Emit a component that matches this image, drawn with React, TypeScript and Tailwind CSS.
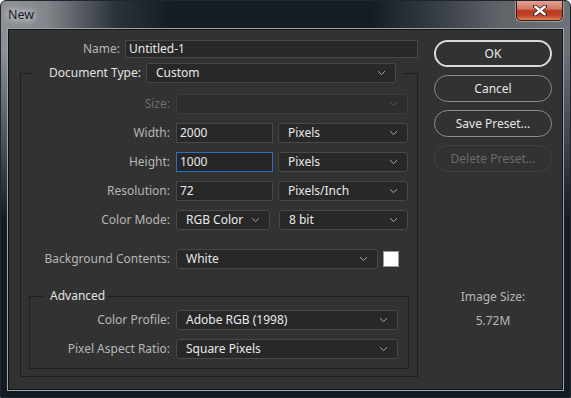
import React from "react";

const Chevron = ({ dim = false }: { dim?: boolean }) => (
  <svg width="9" height="6" viewBox="0 0 9 6" className="shrink-0">
    <path d="M1 1.2 L4.5 4.6 L8 1.2" fill="none" stroke={dim ? "#555555" : "#a8a8a8"} strokeWidth="1" />
  </svg>
);

function Select({ w, value, disabled = false }: { w: string; value?: string; disabled?: boolean }) {
  return (
    <div
      className={`${w} flex h-[20px] shrink-0 items-center justify-between rounded-[3px] border pl-[9px] pr-[9px] ${
        disabled ? "border-[#3d3d3d] bg-[#2d2d2d]" : "border-[#484848] bg-[#282828]"
      }`}
    >
      <span className="text-[#e8e8e8]">{value}</span>
      <Chevron dim={disabled} />
    </div>
  );
}

function Input({ w, value, focus = false }: { w: string; value: string; focus?: boolean }) {
  return (
    <div
      className={`${w} flex h-[20px] shrink-0 items-center border pl-[3px] ${
        focus ? "border-[#2d6fc4] bg-[#262626]" : "border-[#484848] bg-[#282828]"
      }`}
    >
      <span className="text-[#e8e8e8]">{value}</span>
    </div>
  );
}

function Label({ w, children, dim = false }: { w: string; children: React.ReactNode; dim?: boolean }) {
  return (
    <div className={`${w} shrink-0 pr-[6px] text-right ${dim ? "text-[#6e6e6e]" : "text-[#b6b6b6]"}`}>{children}</div>
  );
}

function Btn({ children, kind }: { children: React.ReactNode; kind: "ok" | "normal" | "disabled" }) {
  const cls =
    kind === "ok"
      ? "border-[2px] border-[#d9d9d9] text-[#ececec]"
      : kind === "normal"
      ? "border border-[#8c8c8c] text-[#e6e6e6]"
      : "border border-[#414141] text-[#6a6a6a]";
  return (
    <div className={`flex h-[27px] w-[118px] items-center justify-center rounded-full ${cls}`}>{children}</div>
  );
}

export default function App() {
  return (
    <div
      className="flex h-[398px] w-[571px] flex-col overflow-hidden rounded-t-[6px] border border-[#20262d] bg-[linear-gradient(to_bottom,rgba(20,27,35,0)_0px,rgba(20,27,35,0)_50px,#141b23_220px),linear-gradient(to_right,#8d9196_0px,#82878c_45px,#2c323a_115px,#161c24_170px,#161c24_370px,#3a4047_440px,#5f6469_500px,#6e7378_571px)]"
      style={{ fontFamily: '"Noto Sans", "Open Sans", sans-serif', fontSize: "12px" }}
    >
      {/* title bar */}
      <div className="flex h-[27px] shrink-0 items-start justify-between">
        <div className="ml-[7px] mt-[5px] text-[12.5px] text-[#16191c] [text-shadow:0_0_6px_#e6eaee,0_0_10px_#dfe3e7]">
          New
        </div>
        <div className="mr-[7px] mt-[-1px] flex h-[21px] w-[47px] items-center justify-center rounded-b-[5px] border border-[#3a1710] bg-[linear-gradient(to_bottom,#e2a296_0%,#d37865_40%,#b63a22_52%,#c2452a_78%,#e08656_100%)] shadow-[0_0_0_1px_rgba(255,255,255,0.35)]">
          <svg width="14" height="11" viewBox="0 0 14 11">
            <path d="M2 1.5 L12 9.5 M12 1.5 L2 9.5" stroke="#3a1a14" strokeWidth="4" strokeLinecap="round" />
            <path d="M2.3 1.8 L11.7 9.2 M11.7 1.8 L2.3 9.2" stroke="#ffffff" strokeWidth="2.4" strokeLinecap="round" />
          </svg>
        </div>
      </div>

      {/* content panel */}
      <div className="mx-[6px] flex h-[363px] shrink-0 border border-[#9ea6ae] bg-[#323232] shadow-[inset_0_0_0_1px_#0f1317]">
        {/* left column */}
        <div className="flex w-[410px] flex-col pt-[11px]">
          <div className="flex h-[18px] items-center">
            <div className="w-[117px] shrink-0 pr-[5px] text-right text-[#b6b6b6]">Name:</div>
            <div className="flex h-[18px] w-[293px] items-center border border-[#484848] bg-[#282828] pl-[3px] text-[#e8e8e8]">
              Untitled-1
            </div>
          </div>

          <fieldset className="ml-[12px] mt-[5px] w-[398px] border border-[#1f1f1f] pb-[7px]">
            <legend className="ml-[12px]">
              <div className="flex items-center pl-[16px] pr-[6px]">
                <div className="w-[97px] text-[#e2e2e2]">Document Type:</div>
                <Select w="w-[250px]" value="Custom" />
              </div>
            </legend>
            <div className="flex flex-col pt-[11px]">
              <div className="flex items-center">
                <Label w="w-[155px]" dim>
                  Size:
                </Label>
                <Select w="w-[232px]" disabled />
              </div>
              <div className="mt-[9px] flex items-center">
                <Label w="w-[155px]">Width:</Label>
                <Input w="w-[97px]" value="2000" />
                <div className="ml-[5px]">
                  <Select w="w-[130px]" value="Pixels" />
                </div>
              </div>
              <div className="mt-[9px] flex items-center">
                <Label w="w-[155px]">Height:</Label>
                <Input w="w-[97px]" value="1000" focus />
                <div className="ml-[5px]">
                  <Select w="w-[130px]" value="Pixels" />
                </div>
              </div>
              <div className="mt-[9px] flex items-center">
                <Label w="w-[155px]">Resolution:</Label>
                <Input w="w-[97px]" value="72" />
                <div className="ml-[5px]">
                  <Select w="w-[130px]" value="Pixels/Inch" />
                </div>
              </div>
              <div className="mt-[9px] flex items-center">
                <Label w="w-[155px]">Color Mode:</Label>
                <Select w="w-[94px]" value="RGB Color" />
                <div className="ml-[9px]">
                  <Select w="w-[129px]" value="8 bit" />
                </div>
              </div>
              <div className="mt-[19px] flex items-center">
                <Label w="w-[155px]">Background Contents:</Label>
                <Select w="w-[202px]" value="White" />
                <div className="ml-[5px] h-[16px] w-[16px] border border-[#9a9a9a] bg-white" />
              </div>

              <fieldset className="ml-[8px] mt-[18px] w-[380px] border border-[#1f1f1f] pb-[9px]">
                <legend className="ml-[13px] pl-[7px] pr-[2px] text-[#e2e2e2]">Advanced</legend>
                <div className="flex flex-col pt-[5px]">
                  <div className="flex items-center">
                    <Label w="w-[146px]">Color Profile:</Label>
                    <Select w="w-[222px]" value="Adobe RGB (1998)" />
                  </div>
                  <div className="mt-[9px] flex items-center">
                    <Label w="w-[146px]">Pixel Aspect Ratio:</Label>
                    <Select w="w-[222px]" value="Square Pixels" />
                  </div>
                </div>
              </fieldset>
            </div>
          </fieldset>
        </div>

        {/* right column */}
        <div className="ml-[16px] flex flex-col items-center pt-[11px]">
          <Btn kind="ok">OK</Btn>
          <div className="mt-[8px]">
            <Btn kind="normal">Cancel</Btn>
          </div>
          <div className="mt-[8px]">
            <Btn kind="normal">Save Preset...</Btn>
          </div>
          <div className="mt-[8px]">
            <Btn kind="disabled">Delete Preset...</Btn>
          </div>
          <div className="mt-[116px] text-[#b6b6b6]">Image Size:</div>
          <div className="mt-[6px] text-[#b6b6b6]">5.72M</div>
        </div>
      </div>
    </div>
  );
}
